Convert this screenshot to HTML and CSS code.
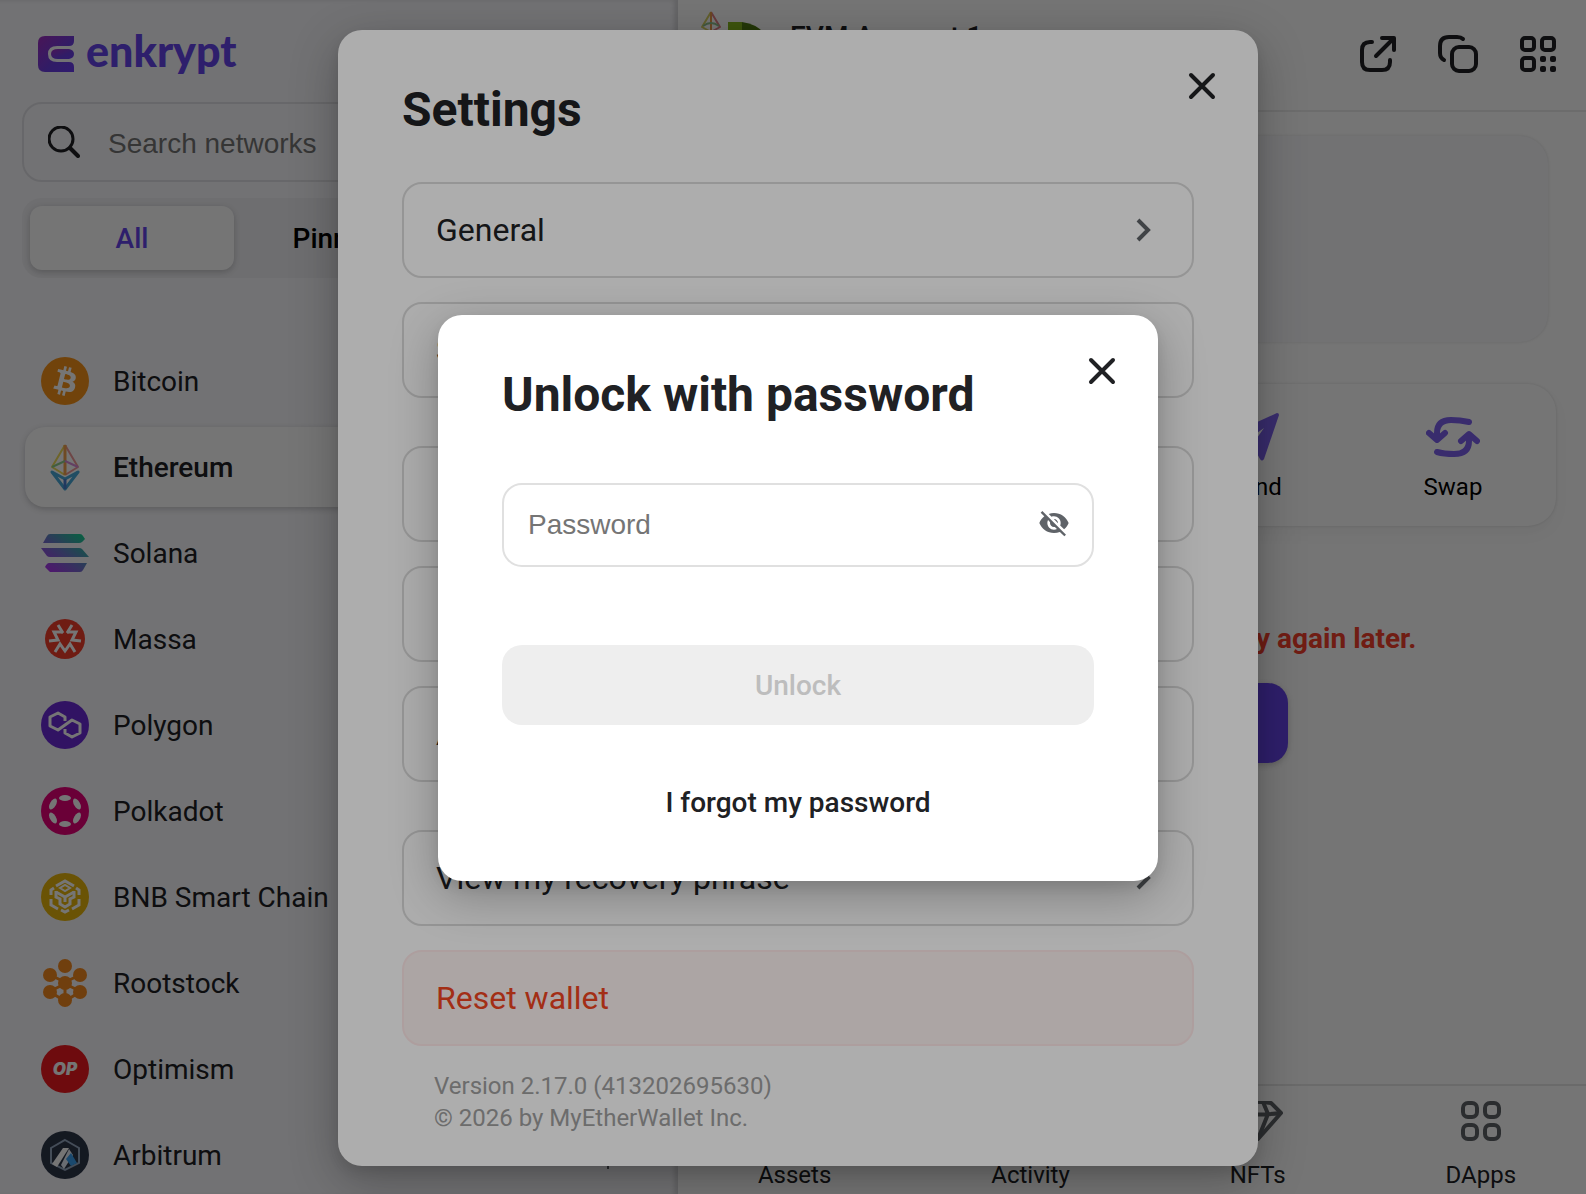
FILE: index.html
```html
<!DOCTYPE html>
<html lang="en">
<head>
    <meta charset="UTF-8">
    <meta name="viewport" content="width=device-width, initial-scale=1.0">
    <title>Enkrypt</title>
    <link rel="stylesheet" href="styles.css">
</head>
<body>
    <div class="app">
        <aside class="sidebar">
            <div class="logo">
                <svg width="36" height="36" viewBox="0 0 36 36">
                    <defs>
                        <linearGradient id="logo-fill" x1="0" y1="0" x2="1" y2="1">
                            <stop offset="0" stop-color="#a02fbe"/>
                            <stop offset="0.6" stop-color="#6a3fe0"/>
                            <stop offset="1" stop-color="#6a3cf0"/>
                        </linearGradient>
                    </defs>
                    <path d="M7 0H36V5Q36 10 31 10H19Q10 10 10 18T19 26H31Q36 26 36 31V36H7Q0 36 0 29V7Q0 0 7 0Z" fill="url(#logo-fill)"/>
                    <path d="M20 13H31Q36 14 36 18T31 23H20Q13 23 13 18T20 13Z" fill="url(#logo-fill)"/>
                </svg>
                <span class="logo-text">enkrypt</span>
            </div>

            <div class="search">
                <svg width="32" height="32" viewBox="0 0 32 32" fill="none" stroke="#202124" stroke-width="3" stroke-linecap="round">
                    <circle cx="13" cy="13" r="12"/>
                    <path d="M22 22L30 30" stroke-width="4"/>
                </svg>
                <input type="text" class="search-input" placeholder="Search networks" aria-label="Search networks">
            </div>

            <div class="tabs">
                <button type="button" class="tab active">All</button>
                <button type="button" class="tab">Pinned</button>
                <button type="button" class="tab" aria-label="New"></button>
            </div>

            <nav class="networks">
                <a href="#" class="network">
                    <svg class="network-icon" viewBox="0 0 32 32">
                        <circle cx="16" cy="16" r="16" fill="#f7931a"/>
                        <path fill="#fff" d="M23.189 14.02c.314-2.096-1.283-3.223-3.465-3.975l.708-2.84-1.728-.43-.69 2.765c-.454-.114-.92-.22-1.385-.326l.695-2.783L15.596 6l-.708 2.839c-.376-.086-.746-.17-1.104-.26l.002-.009-2.384-.595-.46 1.846s1.283.294 1.256.312c.7.175.826.638.805 1.006l-.806 3.235c.048.012.11.03.18.057l-.183-.045-1.13 4.532c-.086.212-.303.531-.793.41.018.025-1.256-.313-1.256-.313l-.858 1.978 2.25.561c.418.105.828.215 1.231.318l-.715 2.872 1.727.43.708-2.84c.472.127.93.245 1.378.357l-.706 2.828 1.728.43.715-2.866c2.948.558 5.164.333 6.097-2.333.752-2.146-.037-3.385-1.588-4.192 1.13-.26 1.98-1.003 2.207-2.538zm-3.95 5.538c-.533 2.147-4.148.986-5.32.695l.95-3.805c1.172.293 4.929.872 4.37 3.11zm.535-5.569c-.487 1.953-3.495.96-4.47.717l.86-3.45c.975.243 4.118.696 3.61 2.733z"/>
                    </svg>
                    Bitcoin
                </a>
                <a href="#" class="network active">
                    <svg class="network-icon" viewBox="0 0 48 48" fill="none" stroke-width="2" stroke-linejoin="round">
                        <path d="M24 2L11 24L24 32" stroke="#f0dc5a"/>
                        <path d="M24 2L37 24L24 32" stroke="#f09a9a"/>
                        <path d="M24 2V32" stroke="#f2a24e" stroke-width="3"/>
                        <path d="M11 24L24 18" stroke="#8fd08c"/>
                        <path d="M24 18L37 24" stroke="#d78ad8"/>
                        <path d="M11 29L24 46L37 29L24 36Z" stroke="#4aa8d8" stroke-width="3"/>
                        <path d="M24 36V46" stroke="#4a7ed0" stroke-width="3"/>
                    </svg>
                    Ethereum
                </a>
                <a href="#" class="network">
                    <svg class="network-icon" viewBox="0 0 48 48">
                        <defs>
                            <linearGradient id="solana-fill" gradientUnits="userSpaceOnUse" x1="8" y1="44" x2="40" y2="4">
                                <stop offset="0" stop-color="#b030f0"/>
                                <stop offset="0.5" stop-color="#6a78c8"/>
                                <stop offset="1" stop-color="#14d090"/>
                            </linearGradient>
                        </defs>
                        <g fill="url(#solana-fill)">
                            <path d="M9 5H39Q41 5 42 7L44 10L41 13Q40 14 38 14H2L6 7Q7 5 9 5Z"/>
                            <path d="M0 19H38Q40 19 41 20L48 28H9Q7 28 6 27Z"/>
                            <path d="M8 34H46L42 41Q41 43 39 43H9L4 38Q6 34 8 34Z"/>
                        </g>
                    </svg>
                    Solana
                </a>
                <a href="#" class="network">
                    <svg class="network-icon" viewBox="0 0 48 48">
                        <circle cx="24" cy="24" r="20" fill="#f23f2c"/>
                        <g fill="none" stroke="#fff" stroke-width="3">
                            <path d="M17 10L22 18M31 10L26 18"/>
                            <path d="M22 17L13 17L17 25L8 26M26 17L35 17L31 25L40 26"/>
                            <path d="M14 37L19 29L24 36L29 29L34 37"/>
                        </g>
                    </svg>
                    Massa
                </a>
                <a href="#" class="network">
                    <svg class="network-icon" viewBox="0 0 48 48">
                        <circle cx="24" cy="24" r="24" fill="#6c2bd9"/>
                        <path d="M24 20V16L17 12L9 16V25L17 29L31 19L39 23V32L31 36L24 32V28" fill="none" stroke="#fff" stroke-width="3" stroke-linejoin="round"/>
                    </svg>
                    Polygon
                </a>
                <a href="#" class="network">
                    <svg class="network-icon" viewBox="0 0 48 48">
                        <circle cx="24" cy="24" r="24" fill="#e6007a"/>
                        <g fill="#fff">
                            <ellipse cx="24" cy="11" rx="6" ry="3"/>
                            <ellipse cx="24" cy="37" rx="6" ry="3"/>
                            <ellipse cx="12" cy="17" rx="6" ry="3" transform="rotate(-60 12 17)"/>
                            <ellipse cx="36" cy="31" rx="6" ry="3" transform="rotate(-60 36 31)"/>
                            <ellipse cx="36" cy="17" rx="6" ry="3" transform="rotate(60 36 17)"/>
                            <ellipse cx="12" cy="31" rx="6" ry="3" transform="rotate(60 12 31)"/>
                        </g>
                    </svg>
                    Polkadot
                </a>
                <a href="#" class="network">
                    <svg class="network-icon" viewBox="0 0 48 48">
                        <circle cx="24" cy="24" r="24" fill="#e8b50c"/>
                        <g fill="none" stroke="#fff" stroke-width="3">
                            <path d="M15 13L24 8L33 13"/>
                            <path d="M19 15L24 18L29 15L24 12Z" stroke-width="2"/>
                            <path d="M10 22V17L13 15M38 22V17L35 15"/>
                            <path d="M10 26V32L17 36M38 26V32L31 36"/>
                            <path d="M15 18V24L19 26V31L24 34L29 31V26L33 24V18"/>
                            <path d="M15 19L24 24L33 19M24 24V29"/>
                            <path d="M20 37L24 39L28 37"/>
                        </g>
                    </svg>
                    BNB Smart Chain
                </a>
                <a href="#" class="network">
                    <svg class="network-icon" viewBox="0 0 48 48" fill="#f58a1f">
                        <path d="M24 25L39 32M24 25L9 32M24 23L9 16M24 23L39 16M24 24V40M9 33L24 42L39 33" stroke="#f58a1f" stroke-width="3" fill="none"/>
                        <circle cx="24" cy="7" r="7"/>
                        <circle cx="9" cy="16" r="7"/>
                        <circle cx="39" cy="16" r="7"/>
                        <circle cx="24" cy="24" r="7"/>
                        <circle cx="9" cy="33" r="7"/>
                        <circle cx="39" cy="33" r="7"/>
                        <circle cx="24" cy="41" r="7"/>
                    </svg>
                    Rootstock
                </a>
                <a href="#" class="network">
                    <svg class="network-icon" viewBox="0 0 48 48">
                        <circle cx="24" cy="24" r="24" fill="#f01a1f"/>
                        <text class="op-text" x="24" y="30" text-anchor="middle">OP</text>
                    </svg>
                    Optimism
                </a>
                <a href="#" class="network">
                    <svg class="network-icon" viewBox="0 0 48 48">
                        <circle cx="24" cy="24" r="24" fill="#2d374b"/>
                        <path d="M24 9L38 17V32L24 39L10 32V17Z" fill="#2d374b" stroke="#96a8c0" stroke-width="2"/>
                        <path d="M22 17L11 33L16 36L28 17Z" fill="#fff"/>
                        <path d="M28 18L20 34L23 38L32 24Z" fill="#e8eef8"/>
                        <path d="M30 22L36 32L30 35L25 28Z" fill="#3aa0f0"/>
                    </svg>
                    Arbitrum
                    <svg class="pin" width="28" height="28" viewBox="0 0 28 28" fill="none" stroke="#5f6368" stroke-width="2">
                        <path d="M9 2H19V12L22 18H6L9 12ZM14 18V28"/>
                    </svg>
                </a>
            </nav>
        </aside>

        <div class="main">
            <header class="header">
                <svg class="chain-badge" width="20" height="32" viewBox="0 0 20 32" fill="none" stroke-width="2" stroke-linejoin="round">
                    <path d="M10 1L1 16L10 21" stroke="#d6cf62"/>
                    <path d="M10 1L19 16L10 21" stroke="#e07f86"/>
                    <path d="M10 1V21" stroke="#e89a4a"/>
                    <path d="M2 15Q10 9 18 15" stroke="#8fc08c"/>
                    <path d="M1 20L10 31L19 20L10 25Z" stroke="#4aa8d8"/>
                </svg>
                <svg width="64" height="64" viewBox="0 0 64 64">
                    <path d="M4 0H18V64H4Z" fill="#86b81e"/>
                    <path d="M18 0Q46 4 46 32T18 64Z" fill="#4e7a12"/>
                </svg>
                <div class="account">
                    <p class="account-name">EVM Account 1</p>
                </div>
                <div class="header-actions">
                    <button type="button" class="icon-btn" aria-label="Open in new window">
                        <svg width="36" height="36" viewBox="0 0 36 36" fill="none" stroke="#202124" stroke-width="4" stroke-linecap="round" stroke-linejoin="round">
                            <path d="M12 6H10Q2 6 2 14V26Q2 34 10 34H22Q30 34 30 26V24"/>
                            <path d="M16 20L33 3M22 2H34V14"/>
                        </svg>
                    </button>
                    <button type="button" class="icon-btn" aria-label="Copy address">
                        <svg width="40" height="38" viewBox="0 0 40 38" fill="none" stroke="#202124" stroke-width="4" stroke-linecap="round">
                            <rect x="14" y="12" width="24" height="24" rx="7"/>
                            <path d="M25 4Q23 2 19 2H11Q2 2 2 11V18Q2 23 6 25"/>
                        </svg>
                    </button>
                    <button type="button" class="icon-btn" aria-label="Show QR code">
                        <svg width="36" height="36" viewBox="0 0 36 36" fill="none" stroke="#202124" stroke-width="4">
                            <rect x="2" y="2" width="12" height="12" rx="3"/>
                            <rect x="22" y="2" width="12" height="12" rx="3"/>
                            <rect x="2" y="22" width="12" height="12" rx="3"/>
                            <g fill="#202124" stroke="none">
                                <rect x="20" y="20" width="6" height="6" rx="2"/>
                                <rect x="30" y="20" width="6" height="6" rx="2"/>
                                <rect x="20" y="30" width="6" height="6" rx="2"/>
                                <rect x="30" y="30" width="6" height="6" rx="2"/>
                            </g>
                        </svg>
                    </button>
                </div>
            </header>

            <main class="content">
                <div class="balance"></div>
                <div class="actions">
                    <button type="button" class="action">
                        <svg width="48" height="48" viewBox="0 0 48 48" fill="#7c62ee">
                            <path d="M46 0L2 20Q-1 22 2 24L12 30L33 15L21 32L29 46Q31 49 33 46L48 2Q48 0 46 0Z"/>
                        </svg>
                        Send
                    </button>
                    <button type="button" class="action">
                        <svg width="54" height="48" viewBox="0 -4 54 48" fill="none" stroke="#7c62ee" stroke-width="6" stroke-linecap="round" stroke-linejoin="round">
                            <path d="M43 5Q34 3 25 3Q11 3 11 16V22M3 16L11 23L19 16"/>
                            <path d="M11 35Q18 37 28 37Q43 37 43 24V18M35 24L43 17L51 24"/>
                        </svg>
                        Swap
                    </button>
                </div>
                <p class="error">Something went wrong. Please try again later.</p>
                <button type="button" class="retry">Retry</button>
            </main>

            <nav class="bottom-nav">
                <a href="#" class="nav-item active">
                    <svg width="40" height="40" viewBox="0 0 40 40" fill="none" stroke="#5f6368" stroke-width="4"><circle cx="20" cy="20" r="17"/></svg>
                    Assets
                </a>
                <a href="#" class="nav-item">
                    <svg width="40" height="40" viewBox="0 0 40 40" fill="none" stroke="#5f6368" stroke-width="4"><path d="M2 22H10L16 6L24 34L30 22H38"/></svg>
                    Activity
                </a>
                <a href="#" class="nav-item">
                    <svg width="50" height="40" viewBox="0 2 50 40" fill="none" stroke="#5f6368" stroke-width="4" stroke-linejoin="round">
                        <path d="M12 3Q25 2 38 4L48 14L25 40L2 14Z"/>
                        <path d="M2 14Q25 17 48 14M30 3L35 15L25 40M20 3L15 15L25 40"/>
                    </svg>
                    NFTs
                </a>
                <a href="#" class="nav-item">
                    <svg width="40" height="40" viewBox="0 0 40 40" fill="none" stroke="#5f6368" stroke-width="4">
                        <rect x="2" y="2" width="14" height="14" rx="5"/>
                        <rect x="24" y="2" width="14" height="14" rx="5"/>
                        <rect x="2" y="24" width="14" height="14" rx="5"/>
                        <rect x="24" y="24" width="14" height="14" rx="5"/>
                    </svg>
                    DApps
                </a>
            </nav>
        </div>

        <div class="overlay">
            <section class="modal settings" role="dialog" aria-labelledby="settings-title">
                <button type="button" class="close" aria-label="Close settings">
                    <svg width="28" height="28" viewBox="0 0 28 28" stroke="#202124" stroke-width="4" stroke-linecap="round"><path d="M3 3L25 25M25 3L3 25"/></svg>
                </button>
                <h2 class="modal-title" id="settings-title">Settings</h2>
                <div class="group">
                    <button type="button" class="row">General <svg class="chevron" viewBox="0 0 16 24"><path d="M3 2L13 12L3 22"/></svg></button>
                    <button type="button" class="row">Support <svg class="chevron" viewBox="0 0 16 24"><path d="M3 2L13 12L3 22"/></svg></button>
                </div>
                <div class="group">
                    <button type="button" class="row">Help</button>
                    <button type="button" class="row">Privacy</button>
                    <button type="button" class="row">About</button>
                </div>
                <div class="group">
                    <button type="button" class="row">View my recovery phrase <svg class="chevron" viewBox="0 0 16 24"><path d="M3 2L13 12L3 22"/></svg></button>
                    <button type="button" class="row reset">Reset wallet</button>
                </div>
                <p class="version">Version 2.17.0 (413202695630)<br>&copy; 2026 by MyEtherWallet Inc.</p>
            </section>
        </div>

        <div class="overlay">
            <form class="modal unlock" role="dialog" aria-labelledby="unlock-title">
                <button type="button" class="close" aria-label="Close">
                    <svg width="28" height="28" viewBox="0 0 28 28" stroke="#202124" stroke-width="4" stroke-linecap="round"><path d="M3 3L25 25M25 3L3 25"/></svg>
                </button>
                <h2 class="modal-title" id="unlock-title">Unlock with password</h2>
                <div class="password">
                    <input type="password" class="password-input" placeholder="Password" aria-label="Password">
                    <button type="button" class="icon-btn" aria-label="Show password">
                        <svg width="32" height="32" viewBox="0 0 24 24" fill="#5f6368">
                            <path d="M12 7c2.76 0 5 2.24 5 5 0 .65-.13 1.26-.36 1.83l2.92 2.92c1.51-1.26 2.7-2.89 3.43-4.75-1.73-4.39-6-7.5-11-7.5-1.4 0-2.74.25-3.98.7l2.16 2.16C10.74 7.13 11.35 7 12 7zM2 4.27l2.28 2.28.46.46C3.08 8.3 1.78 10.02 1 12c1.73 4.39 6 7.5 11 7.5 1.55 0 3.03-.3 4.38-.84l.42.42L19.73 22 21 20.73 3.27 3 2 4.27zM7.53 9.8l1.55 1.55c-.05.21-.08.43-.08.65 0 1.66 1.34 3 3 3 .22 0 .44-.03.65-.08l1.55 1.55c-.67.33-1.41.53-2.2.53-2.76 0-5-2.24-5-5 0-.79.2-1.53.53-2.2zm4.31-.78l3.15 3.15.02-.16c0-1.66-1.34-3-3-3l-.17.01z"/>
                        </svg>
                    </button>
                </div>
                <button type="submit" class="unlock-btn" disabled>Unlock</button>
                <button type="button" class="forgot">I forgot my password</button>
            </form>
        </div>
    </div>
</body>
</html>
```
FILE: styles.css
```css
* {
    box-sizing: border-box;
}
body {
    margin: 0;
    overflow: hidden;
    font-family: Roboto, sans-serif;
    font-size: 28px;
    color: #202124;
}
p, h2 {
    margin: 0;
}
button, input {
    font: inherit;
    color: inherit;
    border: none;
    background: none;
    padding: 0;
    outline: none;
}
a {
    color: inherit;
    text-decoration: none;
}
svg {
    display: block;
    flex-shrink: 0;
}

/* a little wider and taller than the window, the rest is cut off */
.app {
    position: relative;
    display: flex;
    width: calc(100% + 10px);
    height: calc(100vh + 2px);
    background: #fff;
}

/* sidebar */
.sidebar {
    width: 678px;
    flex-shrink: 0;
    display: flex;
    flex-direction: column;
    overflow: hidden;
    padding: 36px 28px 0 22px;
    background: #f8f8fc;
    box-shadow: inset -4px 0 4px rgba(0, 0, 0, 0.12);
}
.logo {
    display: flex;
    align-items: center;
    gap: 12px;
    height: 36px;
    padding-left: 16px;
    margin-bottom: 30px;
}
.logo-text {
    padding-bottom: 6px;
    font-family: Lato, sans-serif;
    font-weight: 900;
    font-size: 43px;
    line-height: 36px;
    color: #6645ea;
}
.search {
    display: flex;
    align-items: center;
    gap: 28px;
    height: 80px;
    flex-shrink: 0;
    padding: 0 24px;
    border: 2px solid #e2e2e6;
    border-radius: 20px;
}
.search-input, .password-input {
    flex: 1;
    min-width: 0;
    font-family: "Liberation Sans", sans-serif;
}
.search-input {
    padding-top: 4px;
}
.search-input::placeholder, .password-input::placeholder {
    color: #757575;
    opacity: 1;
}
.tabs {
    display: flex;
    flex-shrink: 0;
    height: 80px;
    padding: 8px;
    margin: 16px 0 63px;
    border-radius: 20px;
    background: #efeff3;
}
.tab {
    flex: 1;
    border-radius: 12px;
    font-weight: 500;
    color: #000;
}
.tab.active {
    background: #fff;
    color: #6645ea;
    box-shadow: 0 2px 6px rgba(0, 0, 0, 0.2);
}
.networks {
    display: flex;
    flex-direction: column;
    gap: 6px;
    padding-left: 3px;
}
.network {
    display: flex;
    align-items: center;
    gap: 24px;
    height: 80px;
    flex-shrink: 0;
    padding: 0 28px 0 16px;
    border-radius: 20px;
}
.network.active {
    background: #fff;
    font-weight: 500;
    box-shadow: 0 2px 6px rgba(0, 0, 0, 0.2);
}
.network-icon {
    width: 48px;
    height: 48px;
}
.op-text {
    font-family: Inter, sans-serif;
    font-size: 17px;
    font-weight: 900;
    font-style: italic;
    fill: #fff;
}
.pin {
    margin-left: auto;
}

/* main area */
.main {
    flex: 1;
    display: flex;
    flex-direction: column;
    min-width: 0;
}
.header {
    display: flex;
    align-items: center;
    height: 112px;
    padding: 0 40px 2px 23px;
    border-bottom: 2px solid #ececec;
}
.chain-badge {
    align-self: flex-start;
    margin: 11px 3px 0 0;
}
.account {
    align-self: flex-start;
    padding: 21px 0 0 2px;
}
.account-name {
    font-weight: 500;
    line-height: 32px;
}
.header-actions {
    display: flex;
    align-items: center;
    gap: 42px;
    margin-left: auto;
}
.content {
    flex: 1;
    display: flex;
    flex-direction: column;
    align-items: center;
    padding: 24px 40px 0;
}
.balance {
    align-self: stretch;
    height: 206px;
    margin: 0 8px 42px 0;
    border-radius: 28px;
    background: #f8f8fb;
    box-shadow: 0 0 3px rgba(0, 0, 0, 0.14);
}
.actions {
    align-self: stretch;
    display: flex;
    justify-content: flex-end;
    height: 142px;
    padding: 4px 4px 0 0;
    border-radius: 28px;
    box-shadow: 0 0 3px rgba(0, 0, 0, 0.14), 0 8px 16px rgba(0, 0, 0, 0.04);
}
.action {
    display: flex;
    flex-direction: column;
    align-items: center;
    justify-content: center;
    gap: 12px;
    width: 198px;
    font-size: 24px;
    line-height: 28px;
    color: #000;
}
.error {
    margin: 97px 0 28px;
    padding-right: 18px;
    font-weight: 700;
    line-height: 32px;
    color: #f5402c;
}
.retry {
    width: 302px;
    height: 80px;
    border-radius: 20px;
    background: #6645ea;
    color: #fff;
    box-shadow: 0 2px 6px rgba(0, 0, 0, 0.2);
}
.bottom-nav {
    display: flex;
    justify-content: space-around;
    height: 112px;
    padding-top: 15px;
    border-top: 2px solid #e8e8e8;
}
.nav-item {
    display: flex;
    flex-direction: column;
    align-items: center;
    gap: 20px;
    font-size: 24px;
    line-height: 28px;
}

/* modals */
.overlay {
    position: absolute;
    inset: 0;
    display: flex;
    align-items: center;
    justify-content: center;
    background: rgba(0, 0, 0, 0.32);
}
.modal {
    position: relative;
    display: flex;
    flex-direction: column;
    padding: 52px 64px 32px;
    border-radius: 24px;
    background: #fff;
    box-shadow: 0 6px 12px rgba(0, 0, 0, 0.08), 0 14px 48px rgba(0, 0, 0, 0.28);
}
.settings {
    width: 920px;
}
.unlock {
    width: 720px;
    padding-bottom: 55px;
}
.close {
    position: absolute;
    top: 42px;
    right: 42px;
}
.modal-title {
    font-size: 48px;
    font-weight: 700;
    line-height: 56px;
    margin-bottom: 44px;
}
.group {
    display: flex;
    flex-direction: column;
    gap: 24px;
}
.group + .group {
    margin-top: 48px;
}
.row {
    display: flex;
    align-items: center;
    justify-content: space-between;
    height: 96px;
    padding: 0 41px 0 32px;
    border: 2px solid #dcdcdc;
    border-radius: 20px;
    font-size: 32px;
}
.chevron {
    width: 16px;
    height: 24px;
    fill: none;
    stroke: #5f6368;
    stroke-width: 4;
}
.reset {
    color: #f0441f;
    background: #fef4f2;
    border-color: #ffe9e9;
}
.version {
    margin-top: 24px;
    padding-left: 32px;
    font-size: 24px;
    line-height: 32px;
    color: #a0a0a0;
}
.password {
    display: flex;
    align-items: center;
    height: 84px;
    margin: 16px 0 78px;
    padding: 0 22px 0 24px;
    border: 2px solid #e0e0e0;
    border-radius: 20px;
}
.password .icon-btn {
    padding-bottom: 4px;
}
.unlock-btn {
    height: 80px;
    border-radius: 20px;
    background: #eee;
    font-weight: 500;
    color: #bdbdbd;
}
.forgot {
    align-self: center;
    height: 48px;
    margin-top: 53px;
    font-weight: 500;
}
```
